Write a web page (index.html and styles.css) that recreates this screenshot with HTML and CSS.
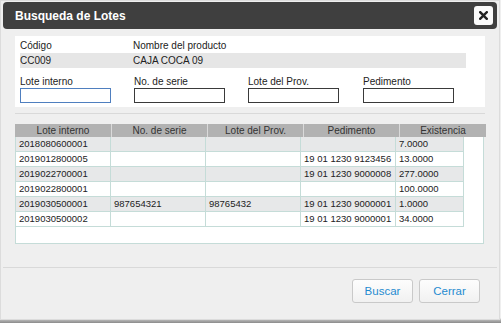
FILE: index.html
```html
<!DOCTYPE html>
<html lang="es">
<head>
    <meta charset="UTF-8">
    <title>Busqueda de Lotes</title>
    <link rel="stylesheet" href="styles.css">
</head>
<body>
    <div class="dialog">
        <div class="titlebar">
            <span class="title">Busqueda de Lotes</span>
            <button class="close" title="Cerrar">
                <svg width="9" height="9" viewBox="0 0 9 9">
                    <path d="M1.2 1.2 L7.8 7.8 M7.8 1.2 L1.2 7.8" stroke="#222" stroke-width="2.4" stroke-linecap="square"/>
                </svg>
            </button>
        </div>

        <div class="content">
            <div class="panel">
                <div class="product-labels">
                    <span class="col-code">Código</span>
                    <span>Nombre del producto</span>
                </div>
                <div class="product-values">
                    <span class="col-code">CC009</span>
                    <span>CAJA COCA 09</span>
                </div>
                <div class="filters">
                    <label class="field">
                        <span>Lote interno</span>
                        <input type="text" class="focused">
                    </label>
                    <label class="field">
                        <span>No. de serie</span>
                        <input type="text">
                    </label>
                    <label class="field">
                        <span>Lote del Prov.</span>
                        <input type="text">
                    </label>
                    <label class="field">
                        <span>Pedimento</span>
                        <input type="text">
                    </label>
                </div>
            </div>

            <div class="divider"></div>

            <div class="grid">
                <table class="grid-head">
                    <tr>
                        <th class="c1">Lote interno</th>
                        <th class="c2">No. de serie</th>
                        <th class="c3">Lote del Prov.</th>
                        <th class="c4">Pedimento</th>
                        <th class="c5h">Existencia</th>
                    </tr>
                </table>
                <div class="grid-body">
                    <table id="rows"></table>
                </div>
            </div>
        </div>

        <div class="footer">
            <button class="btn">Buscar</button>
            <button class="btn">Cerrar</button>
        </div>
    </div>

    <script>
        const lotes = [
            ['2018080600001', '', '', '', '7.0000'],
            ['2019012800005', '', '', '19 01 1230 9123456', '13.0000'],
            ['2019022700001', '', '', '19 01 1230 9000008', '277.0000'],
            ['2019022800001', '', '', '', '100.0000'],
            ['2019030500001', '987654321', '98765432', '19 01 1230 9000001', '1.0000'],
            ['2019030500002', '', '', '19 01 1230 9000001', '34.0000']
        ];

        const table = document.getElementById('rows');
        lotes.forEach(function (lote, i) {
            const tr = document.createElement('tr');
            if (i % 2 === 0) tr.classList.add('alt');
            lote.forEach(function (valor, j) {
                const td = document.createElement('td');
                td.className = 'c' + (j + 1);
                td.textContent = valor;
                tr.appendChild(td);
            });
            table.appendChild(tr);
        });
    </script>
</body>
</html>
```

FILE: styles.css
```css
html, body {
    margin: 0;
    padding: 0;
}
body {
    background: linear-gradient(#efefef 318px, #b5b5b5 320px, #8a8a8a);
    font-family: "Liberation Sans", Arial, sans-serif;
    font-size: 10px;
    color: #222;
    height: 323px;
}
.dialog {
    box-sizing: border-box;
    width: 500px;
    height: 320px;
    background: #efefef;
    border: 1px solid #dcdcdc;
    padding: 1px 2px 2px;
    display: flex;
    flex-direction: column;
}
.titlebar {
    height: 27px;
    background: #3f3f3f;
    border-radius: 4px;
    display: flex;
    align-items: center;
    justify-content: space-between;
    padding: 0 4px 0 12px;
}
.title {
    color: #fff;
    font-weight: bold;
    font-size: 12px;
}
.close {
    width: 19px;
    height: 19px;
    padding: 0;
    border: none;
    border-radius: 3px;
    background: #fafafa;
    display: flex;
    align-items: center;
    justify-content: center;
}
.content {
    padding: 7px 12px 0;
}
.panel {
    background: #fff;
    padding: 4px 5px 4px;
}
.product-labels,
.product-values {
    display: flex;
}
.product-labels {
    line-height: 12px;
}
.product-values {
    width: 446px;
    margin-top: 1px;
    line-height: 15px;
    background: #e6e6e6;
}
.col-code {
    width: 113px;
}
.filters {
    display: grid;
    grid-template-columns: 114px 114px 115px 114px;
    margin-top: 7px;
}
.field {
    display: flex;
    flex-direction: column;
    line-height: 13px;
}
.field input {
    box-sizing: border-box;
    width: 91px;
    height: 15px;
    margin: 0;
    padding: 0 2px;
    border: 1px solid #3a3a3a;
    font: inherit;
    outline: none;
}
.field input.focused {
    border-color: #4f7fbf;
}
.divider {
    height: 1px;
    background: #d9d9d9;
    margin-top: 6px;
}
.grid {
    margin-top: 10px;
}
table {
    border-collapse: collapse;
    table-layout: fixed;
}
.grid-head {
    width: 467px;
}
.grid-head th {
    height: 13px;
    padding: 0;
    background: #b2b2b2;
    border-right: 1px solid #dadada;
    font-weight: normal;
    color: #333;
    line-height: 13px;
}
.grid-head th:last-child {
    border-right: none;
}
.grid-body {
    box-sizing: border-box;
    width: 469px;
    height: 107px;
    background: #fff;
    border: 1px solid #c5dcd8;
    border-top: none;
}
.grid-body td {
    height: 14px;
    padding: 0 0 0 3px;
    border: 1px solid #c5dcd8;
    border-top: none;
    font-size: 9.5px;
    line-height: 14px;
    white-space: nowrap;
    overflow: hidden;
}
.grid-body tr.alt td {
    background: #e7e8e9;
}
.grid-body td.c1 {
    border-left: none;
}
.c1 { width: 96px; }
.c2 { width: 95px; }
.c3 { width: 95px; }
.c4 { width: 95px; }
.c5h { width: 86px; }
.grid-body .c1 { width: 91px; }
.grid-body .c2,
.grid-body .c3,
.grid-body .c4 { width: 91px; }
.grid-body .c5 { width: 64px; }
.footer {
    margin-top: auto;
    border-top: 1px solid #d9d9d9;
    padding: 11px 17px 14px 0;
    display: flex;
    justify-content: flex-end;
    gap: 6px;
}
.btn {
    width: 61px;
    height: 24px;
    padding: 0;
    border: 1px solid #c9c9c9;
    border-radius: 3px;
    background: linear-gradient(#fdfdfd, #f1f1f1);
    color: #1f8bd0;
    font-family: "Liberation Sans", Arial, sans-serif;
    font-size: 11.5px;
}
```
